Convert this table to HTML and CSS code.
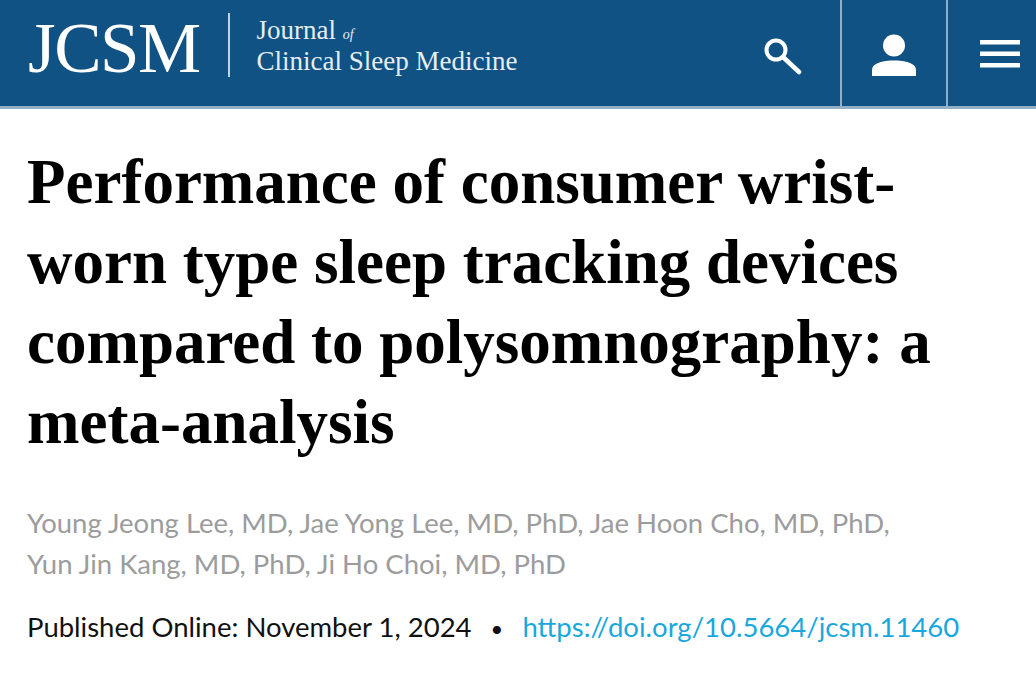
FILE: index.html
```html
<!DOCTYPE html>
<html lang="en">
<head>
<meta charset="utf-8">
<title>JCSM – Performance of consumer wrist-worn type sleep tracking devices</title>
<link rel="stylesheet" href="styles.css">
</head>
<body>
<header class="site-header">
  <a class="brand" href="#">
    <span class="brand-mark">JCSM</span>
    <span class="brand-rule"></span>
    <span class="brand-name">
      <span class="brand-line">Journal <em class="brand-of">of</em></span>
      <span class="brand-line">Clinical Sleep Medicine</span>
    </span>
  </a>
  <nav class="nav">
    <a class="nav-cell nav-search" href="#" aria-label="Search">
      <svg width="40" height="42" viewBox="0 0 40 42" aria-hidden="true">
        <circle cx="14" cy="17" r="9.5" fill="none" stroke="#fff" stroke-width="4"/>
        <line x1="21" y1="24" x2="37" y2="39" stroke="#fff" stroke-width="4.5" stroke-linecap="round"/>
      </svg>
    </a>
    <a class="nav-cell nav-user" href="#" aria-label="Account">
      <svg width="48" height="48" viewBox="0 0 48 48" aria-hidden="true">
        <circle cx="24" cy="14.5" r="11" fill="#fff"/>
        <path d="M2 45 V39 C2 32 13 29.5 24 29.5 S46 32 46 39 V45 Z" fill="#fff"/>
      </svg>
    </a>
    <a class="nav-cell nav-menu" href="#" aria-label="Menu">
      <svg width="40" height="28" viewBox="0 0 40 28" aria-hidden="true">
        <rect x="0" y="0" width="40" height="4.5" fill="#fff"/>
        <rect x="0" y="11.5" width="40" height="4.5" fill="#fff"/>
        <rect x="0" y="23" width="40" height="4.5" fill="#fff"/>
      </svg>
    </a>
  </nav>
</header>

<main class="article">
  <h1 class="title">Performance of consumer wrist-worn type sleep tracking devices compared to polysomnography: a meta-analysis</h1>
  <p class="authors">Young Jeong Lee, MD, Jae Yong Lee, MD, PhD, Jae Hoon Cho, MD, PhD, Yun Jin Kang, MD, PhD, Ji Ho Choi, MD, PhD</p>
  <p class="meta">Published Online: November 1, 2024 <span class="dot">•</span> <a class="doi" href="#">https://doi.org/10.5664/jcsm.11460</a></p>
</main>
</body>
</html>
```

FILE: styles.css
```css
* { box-sizing: border-box; }

html, body {
  margin: 0;
  padding: 0;
  background: #fff;
}

body {
  font-family: "Lato", "Liberation Sans", sans-serif;
  color: #111;
  overflow: hidden;
}

a { text-decoration: none; }

.site-header {
  display: flex;
  justify-content: space-between;
  height: 109px;
  background: #0f5283;
  border-bottom: 3px solid #93b0c7;
}

.brand {
  display: flex;
  align-items: flex-start;
  padding-left: 28px;
  color: #fff;
}

.brand-mark {
  font-family: "Liberation Serif", serif;
  font-size: 71px;
  line-height: 1;
  letter-spacing: -1.5px;
  margin-top: 13px;
  color: #fff;
}

.brand-rule {
  width: 2px;
  height: 64px;
  margin: 13px 27px 0 28px;
  background: rgba(255, 255, 255, 0.75);
}

.brand-name {
  display: flex;
  flex-direction: column;
  margin-top: 17px;
  font-family: "Liberation Serif", serif;
  font-size: 27px;
  line-height: 26px;
  color: #e6edf3;
}

.brand-of {
  font-size: 14px;
  font-style: italic;
}

.nav {
  display: flex;
  height: 106px;
}

.nav-cell {
  display: flex;
  align-items: center;
  height: 106px;
}

.nav-search {
  width: 100px;
  justify-content: flex-start;
  padding-left: 22px;
  padding-top: 2px;
}

.nav-user {
  width: 106px;
  justify-content: center;
  border-left: 2px solid #8fb0c9;
  padding-top: 4px;
}

.nav-menu {
  width: 90px;
  justify-content: flex-start;
  padding-left: 32px;
  border-left: 2px solid #8fb0c9;
  padding-top: 2px;
}

.article {
  padding: 33px 27px 0 27px;
}

.title {
  margin: 0;
  font-family: "Liberation Serif", serif;
  font-weight: 700;
  font-size: 63px;
  line-height: 80px;
  color: #000;
}

.authors {
  max-width: 880px;
  margin: 40px 0 0;
  font-size: 27.5px;
  line-height: 41px;
  color: #9c9c9c;
}

.meta {
  margin: 25px 0 0;
  font-size: 27.5px;
  line-height: 36px;
  color: #111;
}

.dot {
  margin: 0 12px;
  font-size: 22px;
}

.doi {
  color: #1aa8dc;
}
```
